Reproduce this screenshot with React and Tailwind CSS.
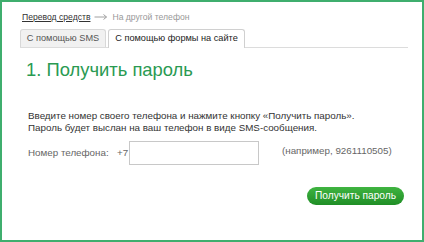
export default function App() {
  return (
    <div className="w-[424px] h-[242px] bg-white" style={{ fontFamily: '"Liberation Sans", Arial, sans-serif' }}>
      <div className="w-full h-full border-2 border-[#3fae6e] box-border relative">
        <div className="pl-[18px] pr-[14px] pt-[9px]">
          <div className="flex items-center text-[8.6px] leading-[12px] h-[12px] pl-[2px]">
            <span className="text-[#333] underline">Перевод средств</span>
            <svg width="14" height="8" viewBox="0 0 14 8" className="mx-[4px]">
              <path d="M0.5 4H12.5M9.5 1.5L12.5 4L9.5 6.5" stroke="#a0a0a0" strokeWidth="1" fill="none" />
            </svg>
            <span className="text-[#999]">На другой телефон</span>
          </div>
          <div className="flex items-end mt-[6px] border-b border-[#dcdcdc] h-[19px]">
            <div className="h-[18px] w-[86px] flex items-center justify-center text-[9.2px] text-[#555] bg-[#f1f1f1] border border-[#d8d8d8] border-b-0 rounded-t-[3px] whitespace-nowrap">С помощью SMS</div>
            <div className="h-[19px] w-[137px] ml-[2px] flex items-center justify-center text-[9.2px] text-[#222] bg-white border border-[#d0d0d0] border-b-0 rounded-t-[3px] -mb-px whitespace-nowrap">С помощью формы на сайте</div>
          </div>
          <div className="pl-[8px]">
            <h1 className="text-[18.4px] leading-[22px] text-[#2a9a52] mt-[11px] -ml-[2px]">1. Получить пароль</h1>
            <p className="text-[9.8px] leading-[12px] text-[#333] mt-[29px] whitespace-nowrap">
              Введите номер своего телефона и нажмите кнопку «Получить пароль».
              <br />
              Пароль будет выслан на ваш телефон в виде SMS-сообщения.
            </p>
            <div className="flex items-center mt-[7px] text-[9.8px] text-[#666] whitespace-nowrap">
              <span className="w-[89px]">Номер телефона:</span>
              <span className="w-[12px]">+7</span>
              <div className="w-[130px] h-[24px] border border-[#c8c8c8] bg-white"></div>
              <span className="ml-[23px] -mt-[3px]">(например, 9261110505)</span>
            </div>
          </div>
          <div className="flex justify-end mt-[22px] pr-[4px]">
            <div className="h-[18px] w-[97px] justify-center rounded-full bg-gradient-to-b from-[#3fb441] to-[#1f8e26] text-white text-[10.2px] flex items-center whitespace-nowrap">Получить пароль</div>
          </div>
        </div>
      </div>
    </div>
  );
}
